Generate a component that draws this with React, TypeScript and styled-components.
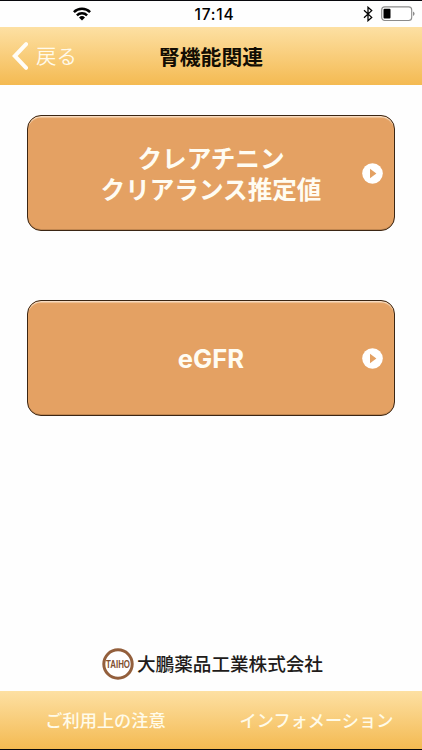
import React from "react";
import styled, { createGlobalStyle } from "styled-components";

const Global = createGlobalStyle`
  * { box-sizing: border-box; }
  body { margin: 0; background: #fff; }
  button { font: inherit; color: inherit; border: 0; padding: 0; background: none; }
`;

const Screen = styled.div`
  width: 422px;
  height: 750px;
  display: flex;
  flex-direction: column;
  overflow: hidden;
  background: #fefefe;
  border-top: 1px solid #08080c;
  border-bottom: 1px solid #08080c;
  font-family: Inter, "Noto Sans CJK JP", sans-serif;
`;

const StatusBar = styled.div`
  height: 26px;
  flex: none;
  display: grid;
  grid-template-columns: 1fr 60px 1fr;
  align-items: center;
  color: #000;
`;

const Signal = styled.div`
  display: flex;
  padding-left: 73px;
`;

const Clock = styled.time`
  text-align: center;
  font-size: 15.5px;
  line-height: 24px;
  font-weight: 500;
  letter-spacing: 0.8px;
  padding-top: 2px;
  padding-left: 7px;
  white-space: nowrap;
`;

const Power = styled.div`
  display: flex;
  justify-content: flex-end;
  align-items: center;
  gap: 8px;
  padding-right: 7px;
`;

const barFill = "linear-gradient(#fde0a3, #f4ba52)";

const Header = styled.header`
  height: 58px;
  flex: none;
  display: grid;
  grid-template-columns: 1fr 110px 1fr;
  align-items: center;
  background: ${barFill};
`;

const Back = styled.button`
  display: flex;
  align-items: center;
  gap: 8px;
  padding-left: 12px;
  color: #fffaec;
  font-size: 20.4px;
  line-height: 28px;
  font-weight: 350;
`;

const BackLabel = styled.span`
  padding-top: 2px;
`;

const Title = styled.h1`
  margin: 0;
  padding-top: 3px;
  text-align: center;
  white-space: nowrap;
  font-size: 20.8px;
  line-height: 28px;
  font-weight: 700;
  color: #120d03;
`;

const Main = styled.main`
  flex: 1;
  display: flex;
  flex-direction: column;
  gap: 69px;
  padding: 30px 27px 0 27px;
`;

const Choice = styled.button`
  height: 116px;
  flex: none;
  display: grid;
  grid-template-columns: 1fr 250px 1fr;
  align-items: center;
  border: 1px solid #3b2614;
  border-radius: 14px;
  background: #e4a163;
  box-shadow: inset 0 2px 1px -0.5px #f9dfc4, inset 0 -1px 0 #c08650;
`;

const ChoiceLabel = styled.span<{ $latin?: boolean }>`
  grid-column: 2;
  text-align: center;
  white-space: nowrap;
  color: #fffcf2;
  padding-top: ${(p) => (p.$latin ? "0" : "3px")};
  font-size: ${(p) => (p.$latin ? "25.6px" : "24.6px")};
  line-height: 31px;
  font-weight: ${(p) => (p.$latin ? 700 : 600)};
`;

const Go = styled.span`
  display: flex;
  justify-content: flex-end;
  padding-right: 11px;
`;

const Company = styled.div`
  flex: none;
  display: flex;
  align-items: center;
  gap: 3px;
  height: 34px;
  margin-bottom: 10px;
  padding-left: 102px;
`;

const CompanyName = styled.span`
  font-size: 18.6px;
  line-height: 30px;
  font-weight: 500;
  white-space: nowrap;
  color: #211b19;
`;

const Footer = styled.footer`
  height: 58px;
  flex: none;
  display: grid;
  grid-template-columns: 1fr 1fr;
  background: ${barFill};
`;

const FooterLink = styled.button`
  padding-top: 2px;
  color: #fffbe9;
  font-size: 17.2px;
  font-weight: 500;
  line-height: 56px;
  white-space: nowrap;
`;

const WifiIcon = () => (
  <svg width="18" height="14" viewBox="0 0 18 14">
    <g fill="none" stroke="#000" strokeWidth="2.5">
      <path d="M0.9 5.1a11.5 11.5 0 0 1 16.2 0" />
      <path d="M3.9 8.3a7.3 7.3 0 0 1 10.2 0" />
    </g>
    <path d="M6 10.4a4.3 4.3 0 0 1 6 0l-3 3z" />
  </svg>
);

const BluetoothIcon = () => (
  <svg width="10" height="16" viewBox="0 0 10 16">
    <path d="M1 4.2l7.7 7.2L5 14.7V1.3l3.7 3.3L1 11.8" fill="none" stroke="#000" strokeWidth="1.3" />
  </svg>
);

const BatteryIcon = () => (
  <svg width="34" height="16" viewBox="0 0 34 16">
    <rect x="0.7" y="0.9" width="30" height="13.6" rx="3" fill="#fff" stroke="#8b8b8b" strokeWidth="1.1" />
    <rect x="2.5" y="2.8" width="7" height="9.7" rx="1" />
    <path d="M32 5.4q1.6 0.8 1.6 2.3T32 10z" fill="#8b8b8b" />
  </svg>
);

const BackChevron = () => (
  <svg width="16" height="28" viewBox="0 0 16 28">
    <path d="M14.1 2.2L2.8 14l11.3 11.8" fill="none" stroke="#fffdf8" strokeWidth="4" strokeLinecap="round" />
  </svg>
);

const PlayIcon = () => (
  <svg width="21" height="21" viewBox="0 0 21 21">
    <circle cx="10.5" cy="10.5" r="10.3" fill="#fff" />
    <path d="M8 5.8l6.4 4.7L8 15.2z" fill="#e4a163" />
  </svg>
);

const TaihoMark = () => (
  <svg width="32" height="32" viewBox="0 0 32 32" overflow="visible">
    <circle cx="16" cy="16" r="14.2" fill="#fff" stroke="#935f3c" strokeWidth="3" />
    <text
      x="16"
      y="19.9"
      textAnchor="middle"
      textLength="24"
      lengthAdjust="spacingAndGlyphs"
      fontFamily="Liberation Sans, sans-serif"
      fontWeight="700"
      fontSize="11"
      fill="#81502f"
    >
      TAIHO
    </text>
  </svg>
);

export default function App() {
  return (
    <>
      <Global />
      <Screen>
        <StatusBar>
          <Signal><WifiIcon /></Signal>
          <Clock>17:14</Clock>
          <Power><BluetoothIcon /><BatteryIcon /></Power>
        </StatusBar>
        <Header>
          <Back><BackChevron /><BackLabel>戻る</BackLabel></Back>
          <Title>腎機能関連</Title>
        </Header>
        <Main>
          <Choice>
            <ChoiceLabel>クレアチニン<br />クリアランス推定値</ChoiceLabel>
            <Go><PlayIcon /></Go>
          </Choice>
          <Choice>
            <ChoiceLabel $latin>eGFR</ChoiceLabel>
            <Go><PlayIcon /></Go>
          </Choice>
        </Main>
        <Company>
          <TaihoMark />
          <CompanyName>大鵬薬品工業株式会社</CompanyName>
        </Company>
        <Footer>
          <FooterLink>ご利用上の注意</FooterLink>
          <FooterLink>インフォメーション</FooterLink>
        </Footer>
      </Screen>
    </>
  );
}
